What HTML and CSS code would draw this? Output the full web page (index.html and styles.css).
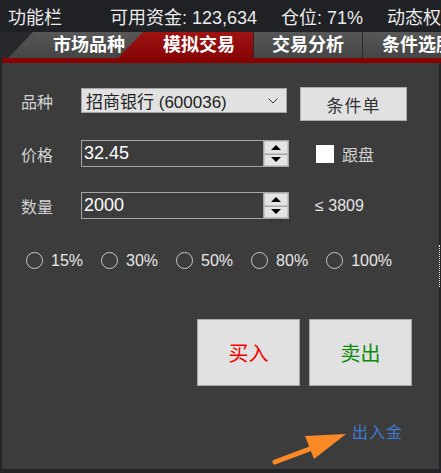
FILE: index.html
```html
<!DOCTYPE html>
<html lang="zh-CN">
<head>
  <meta charset="UTF-8" />
  <title>模拟交易</title>
  <link rel="stylesheet" href="styles.css">
</head>
<body>

<div class="topbar">
  <span class="title">功能栏</span>
  <span>可用资金: 123,634</span>
  <span>仓位: 71%</span>
  <span>动态权益</span>
</div>

<div class="tabs">
  <div class="tab slant first">市场品种</div>
  <div class="tab slant active">模拟交易</div>
  <div class="tab">交易分析</div>
  <div class="tab last">条件选股</div>
</div>
<div class="strip"></div>

<div class="panel">
  <div class="row row-symbol">
    <span class="label">品种</span>
    <div class="select">
      <span>招商银行 (600036)</span>
      <svg class="chevron" width="10" height="6" viewBox="0 0 10 6">
        <path d="M0.5 0.5 L5 5 L9.5 0.5" fill="none" stroke="#333" stroke-width="1" />
      </svg>
    </div>
    <button class="btn-cond">条件单</button>
  </div>

  <div class="row">
    <span class="label">价格</span>
    <div class="spin">
      <span class="spin-value">32.45</span>
      <div class="spin-btns">
        <span class="spin-btn"><i class="tri-up"></i></span>
        <span class="spin-btn"><i class="tri-down"></i></span>
      </div>
    </div>
    <span class="check"></span>
    <span class="check-label">跟盘</span>
  </div>

  <div class="row">
    <span class="label">数量</span>
    <div class="spin">
      <span class="spin-value">2000</span>
      <div class="spin-btns">
        <span class="spin-btn"><i class="tri-up"></i></span>
        <span class="spin-btn"><i class="tri-down"></i></span>
      </div>
    </div>
    <span class="limit">≤ 3809</span>
  </div>

  <div class="radios">
    <span class="radio"><i></i>15%</span>
    <span class="radio"><i></i>30%</span>
    <span class="radio"><i></i>50%</span>
    <span class="radio"><i></i>80%</span>
    <span class="radio"><i></i>100%</span>
  </div>

  <div class="actions">
    <button class="btn-trade buy">买入</button>
    <button class="btn-trade sell">卖出</button>
  </div>

  <div class="funds">出入金</div>

  <!-- annotation arrow pointing at the funds link -->
  <svg class="arrow" width="80" height="40" viewBox="0 0 80 40">
    <line x1="4" y1="35" x2="52" y2="17" stroke="#fb8a26" stroke-width="5" stroke-linecap="round" />
    <polygon points="34,9 75,7 43,32" fill="#fb8a26" />
  </svg>

  <span class="edge-dots"></span>
</div>

</body>
</html>
```

FILE: styles.css
```css
body {
  margin: 0;
  width: 441px;
  height: 473px;
  overflow: hidden;
  background: #222428;
  font-family: "Liberation Sans", "Noto Sans CJK SC", sans-serif;
  color: #e6e6e6;
}

.topbar {
  height: 32px;
  display: flex;
  align-items: center;
  gap: 24px;
  padding-left: 8px;
  font-size: 18px;
  white-space: nowrap;
  background: #1f2124;
  color: #ececec;
}

.topbar .title {
  margin-right: 24px;
}

.tabs {
  height: 26px;
  display: flex;
  background: #26282b;
  white-space: nowrap;
}

.tab {
  height: 26px;
  line-height: 26px;
  font-size: 18px;
  font-weight: bold;
  color: #fff;
  background: linear-gradient(#575757, #454545);
  box-sizing: border-box;
  text-align: center;
  flex-shrink: 0;
}

.tab.slant {
  clip-path: polygon(25px 0, 100% 0, 100% 100%, 0 100%);
  text-align: left;
  padding-left: 45px;
  width: 135px;
}

.tab.first {
  margin-left: 8px;
}

.tab.active {
  margin-left: -25px;
  background: linear-gradient(#a01313, #860606);
}

.tab:nth-child(3) {
  width: 108px;
  margin-left: 1px;
}

.tab.last {
  width: 100px;
  margin-left: 1px;
  text-align: left;
  padding-left: 19px;
}

.strip {
  height: 5px;
  margin-left: 2px;
  background: #870303;
}

.panel {
  position: relative;
  margin-left: 2px;
  width: 437px;
  height: 406px;
  box-sizing: border-box;
  padding: 24px 0 0 19px;
  background: #3c3c3c;
}

.row {
  display: flex;
  align-items: center;
  height: 27px;
  margin-bottom: 25px;
}

.row-symbol {
  align-items: flex-start;
  height: 34px;
  margin-bottom: 19px;
}

.label {
  width: 60px;
  font-size: 16px;
  color: #d2d2d2;
}

.row-symbol .label {
  line-height: 24px;
  margin-top: 4px;
}

.select {
  margin-top: 1px;
  width: 206px;
  height: 25px;
  box-sizing: border-box;
  border: 1px solid #a6a6a6;
  background: #e1e1e1;
  color: #222;
  font-size: 17px;
  display: flex;
  align-items: center;
  justify-content: space-between;
  padding: 0 8px 0 4px;
}

.chevron {
  display: block;
}

.btn-cond {
  margin-left: 13px;
  width: 107px;
  height: 34px;
  border: 1px solid #adadad;
  background: #e1e1e1;
  color: #333;
  font-family: "Noto Sans CJK SC", sans-serif;
  font-size: 17px;
  letter-spacing: 1px;
  padding: 0;
}

.spin {
  width: 208px;
  height: 27px;
  box-sizing: border-box;
  border: 1px solid #a6a6a6;
  display: flex;
  justify-content: space-between;
}

.spin-value {
  padding-left: 2px;
  font-size: 18px;
  line-height: 25px;
  color: #fff;
}

.spin-btns {
  width: 24px;
  display: flex;
  flex-direction: column;
  border-left: 1px solid #a6a6a6;
}

.spin-btn {
  flex: 1;
  display: flex;
  align-items: center;
  justify-content: center;
  background: #e4e4e4;
  border: 1px solid #c4c4c4;
}

.spin-btn + .spin-btn {
  border-top-color: #a6a6a6;
}

.tri-up,
.tri-down {
  width: 0;
  height: 0;
  border-left: 5px solid transparent;
  border-right: 5px solid transparent;
}

.tri-up {
  border-bottom: 5px solid #000;
}

.tri-down {
  border-top: 5px solid #000;
}

.check {
  margin-left: 27px;
  width: 18px;
  height: 18px;
  background: #fff;
}

.check-label {
  margin-left: 8px;
  font-size: 16px;
  color: #d2d2d2;
}

.limit {
  margin-left: 26px;
  font-size: 16px;
  color: #e6e6e6;
}

.radios {
  display: flex;
  gap: 18px;
  margin-left: 5px;
  margin-top: 33px;
  height: 17px;
}

.radio {
  display: flex;
  align-items: center;
  gap: 8px;
  font-size: 16px;
  color: #e6e6e6;
}

.radio i {
  width: 17px;
  height: 17px;
  box-sizing: border-box;
  border: 1px solid #c8c8c8;
  border-radius: 50%;
}

.actions {
  display: flex;
  gap: 9px;
  margin: 50px 0 0 176px;
}

.btn-trade {
  width: 103px;
  height: 67px;
  border: 1px solid #a8a8a8;
  background: #e1e1e1;
  font-family: "Noto Sans CJK SC", sans-serif;
  font-size: 20px;
  padding: 0;
}

.buy {
  color: #f20000;
}

.sell {
  color: #0b8a0b;
}

.funds {
  margin: 33px 0 0 331px;
  font-family: "Noto Sans CJK SC", sans-serif;
  font-size: 16px;
  color: #3f7bd0;
  letter-spacing: 1px;
}

.arrow {
  position: absolute;
  left: 269px;
  top: 364px;
}

.edge-dots {
  position: absolute;
  right: -1px;
  top: 182px;
  height: 42px;
  border-left: 1px dotted #f0f0f0;
}
```
